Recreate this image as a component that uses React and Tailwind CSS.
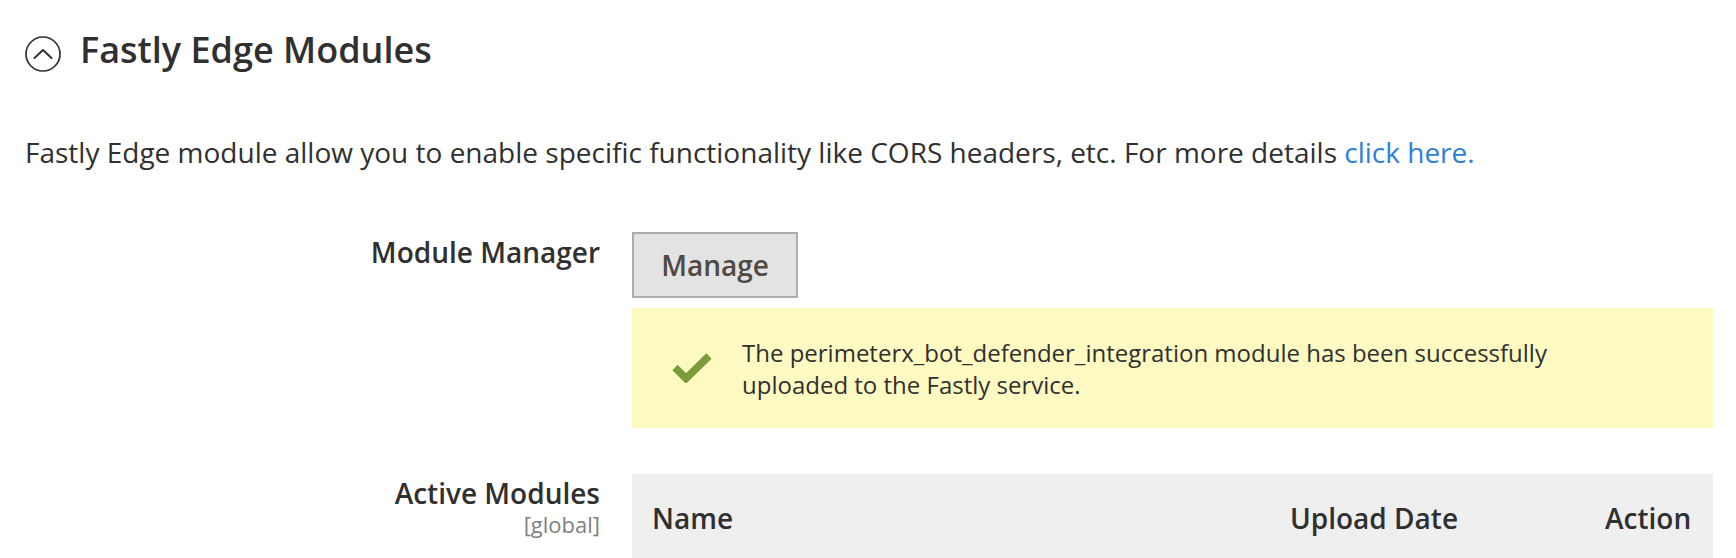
import React from "react";

export default function App() {
  return (
    <div className="w-[1736px] h-[558px] overflow-hidden bg-white text-[#303030] pl-[25px] pr-[23px]" style={{ fontFamily: '"Open Sans", "Noto Sans", sans-serif' }}>
      {/* Title */}
      <div className="flex items-start pt-[26px]">
        <svg className="mt-[10px] shrink-0" width="36" height="36" viewBox="0 0 36 36" fill="none">
          <circle cx="18" cy="18" r="17" stroke="#303030" strokeWidth="1.7" />
          <path d="M9.5 22 L18 14 L26.5 22" stroke="#303030" strokeWidth="1.9" strokeLinecap="round" strokeLinejoin="round" />
        </svg>
        <h2 className="ml-[19px] text-[36px] leading-[48px] font-semibold text-[#303030]">Fastly Edge Modules</h2>
      </div>

      {/* Description */}
      <p className="mt-[59px] text-[28px] leading-[38px]">
        Fastly Edge module allow you to enable specific functionality like CORS headers, etc. For more details{" "}
        <a className="text-[#2f80d8]" href="#">click here.</a>
      </p>

      {/* Module Manager row */}
      <div className="flex mt-[61px]">
        <div className="w-[575px] shrink-0 text-right text-[28px] leading-[38px] font-semibold pt-[1px]">Module Manager</div>
        <div className="ml-[32px] flex-1 flex flex-col items-start">
          <button className="h-[66px] w-[166px] border-2 border-[#adadad] bg-[#e3e3e3] text-[#514943] text-[28px] leading-[38px] font-semibold">
            Manage
          </button>
          <div className="mt-[10px] w-full bg-[#fff9c2] flex items-start pt-[29px] pb-[27px] pr-[80px]">
            <div className="w-[110px] shrink-0 flex justify-center pl-[10px] pt-[16px]">
              <svg width="40" height="30" viewBox="0 0 40 30" fill="none">
                <path d="M3 14.5 L14 25.5 L37 3" stroke="#7a9c3b" strokeWidth="7.5" />
              </svg>
            </div>
            <p className="text-[24px] leading-[32px] text-[#303030]">
              The perimeterx_bot_defender_integration module has been successfully uploaded to the Fastly service.
            </p>
          </div>
        </div>
      </div>

      {/* Active Modules row */}
      <div className="flex mt-[46px]">
        <div className="w-[575px] shrink-0 text-right">
          <div className="text-[28px] leading-[38px] font-semibold">Active Modules</div>
          <div className="text-[22px] leading-[26px] text-[#808080] -mt-[1px]">[global]</div>
        </div>
        <div className="ml-[32px] flex-1 bg-[#efefef] h-[120px]">
          <div className="grid grid-cols-[638px_315px_1fr] pt-[25px] text-[28px] leading-[38px] font-semibold text-[#303030]">
            <div className="pl-[20px]">Name</div>
            <div className="pl-[20px]">Upload Date</div>
            <div className="pl-[20px]">Action</div>
          </div>
        </div>
      </div>
    </div>
  );
}
